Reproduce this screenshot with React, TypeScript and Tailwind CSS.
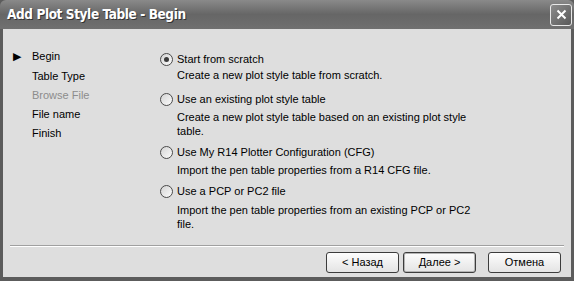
import { useState } from "react";

const steps = [
  { label: "Begin", current: true },
  { label: "Table Type" },
  { label: "Browse File", disabled: true },
  { label: "File name" },
  { label: "Finish" },
];

const options = [
  {
    title: "Start from scratch",
    desc: ["Create a new plot style table from scratch."],
    top: "mt-[23px]",
    gap: "mt-[2px]",
  },
  {
    title: "Use an existing plot style table",
    desc: ["Create a new plot style table based on an existing plot style", "table."],
    top: "mt-[10px]",
    gap: "mt-[4px]",
  },
  {
    title: "Use My R14 Plotter Configuration (CFG)",
    desc: ["Import the pen table properties from a R14 CFG file."],
    top: "mt-[7px]",
    gap: "mt-[4px]",
  },
  {
    title: "Use a PCP or PC2 file",
    desc: ["Import the pen table properties from an existing PCP or PC2", "file."],
    top: "mt-[7px]",
    gap: "mt-[5px]",
  },
];

const Radio = ({ checked }: { checked: boolean }) => (
  <span className="flex h-[13px] w-[13px] shrink-0 items-center justify-center rounded-full border border-[#4a4a4a] bg-gradient-to-br from-[#d4d4d4] to-[#fbfbfb]">
    {checked && <span className="h-[5px] w-[5px] rounded-full bg-[#3a3a3a]" />}
  </span>
);

const WizButton = ({ children, primary }: { children: string; primary?: boolean }) => (
  <button
    className={`flex h-[21px] w-[73px] items-center justify-center rounded-[3px] border border-[#3c3c3c] bg-gradient-to-b from-[#fdfdfd] to-[#e4e4e4] text-[11px] text-black ${
      primary ? "shadow-[inset_0_0_0_1px_#b4b4b4]" : ""
    }`}
  >
    {children}
  </button>
);

export default function App() {
  const [sel, setSel] = useState(0);

  return (
    <div
      className="flex h-[281px] w-[574px] flex-col bg-[#5c5c5c] text-[11px] text-black"
      style={{ fontFamily: '"Liberation Sans", Arial, sans-serif' }}
    >
      <div className="flex h-[29px] shrink-0 items-center justify-between rounded-t-[6px] bg-gradient-to-b from-[#8a8a8a] via-[#666666] to-[#707070] pl-[7px] pr-[2px]">
        <span
          className="text-[13.5px] font-bold tracking-[-0.4px] text-white [text-shadow:1px_1px_0_#333]"
          style={{ fontFamily: '"DejaVu Sans Condensed", "Liberation Sans", sans-serif' }}
        >
          Add Plot Style Table - Begin
        </span>
        <span className="flex h-[22px] w-[22px] items-center justify-center rounded-[3px] border border-[#e8e8e8] bg-gradient-to-br from-[#8c8c8c] to-[#5a5a5a]">
          <svg width="11" height="11" viewBox="0 0 11 11">
            <path d="M1.5 1.5 L9.5 9.5 M9.5 1.5 L1.5 9.5" stroke="white" strokeWidth="2" />
          </svg>
        </span>
      </div>

      <div className="mx-[3px] mb-[4px] flex flex-1 flex-col bg-[#dedede]">
        <div className="flex h-[216px] shrink-0 overflow-hidden">
          <div className="w-[157px] shrink-0 pl-[10px] pt-[18px]">
            {steps.map((s) => (
              <div key={s.label} className="flex h-[19.25px] items-center">
                <span className="w-[19px] text-[11px]">{s.current ? "▶" : ""}</span>
                <span className={s.disabled ? "text-[#8c8c8c]" : ""}>{s.label}</span>
              </div>
            ))}
          </div>
          <div className="flex flex-col">
            {options.map((o, i) => (
              <div key={o.title} className={o.top} onClick={() => setSel(i)}>
                <div className="flex h-[14px] items-center gap-[4px]">
                  <Radio checked={sel === i} />
                  <span>{o.title}</span>
                </div>
                <div className={`${o.gap} pl-[17px] leading-[14px]`}>
                  {o.desc.map((l) => (
                    <div key={l} className="whitespace-nowrap">
                      {l}
                    </div>
                  ))}
                </div>
              </div>
            ))}
          </div>
        </div>

        <div className="mx-[7px] border-t border-b border-t-[#a0a0a0] border-b-white" />

        <div className="flex flex-1 items-start justify-end gap-[4px] pr-[10px] pt-[5px]">
          <WizButton>&lt; Назад</WizButton>
          <WizButton primary>Далее &gt;</WizButton>
          <span className="w-[4px]" />
          <WizButton>Отмена</WizButton>
        </div>
      </div>
    </div>
  );
}
